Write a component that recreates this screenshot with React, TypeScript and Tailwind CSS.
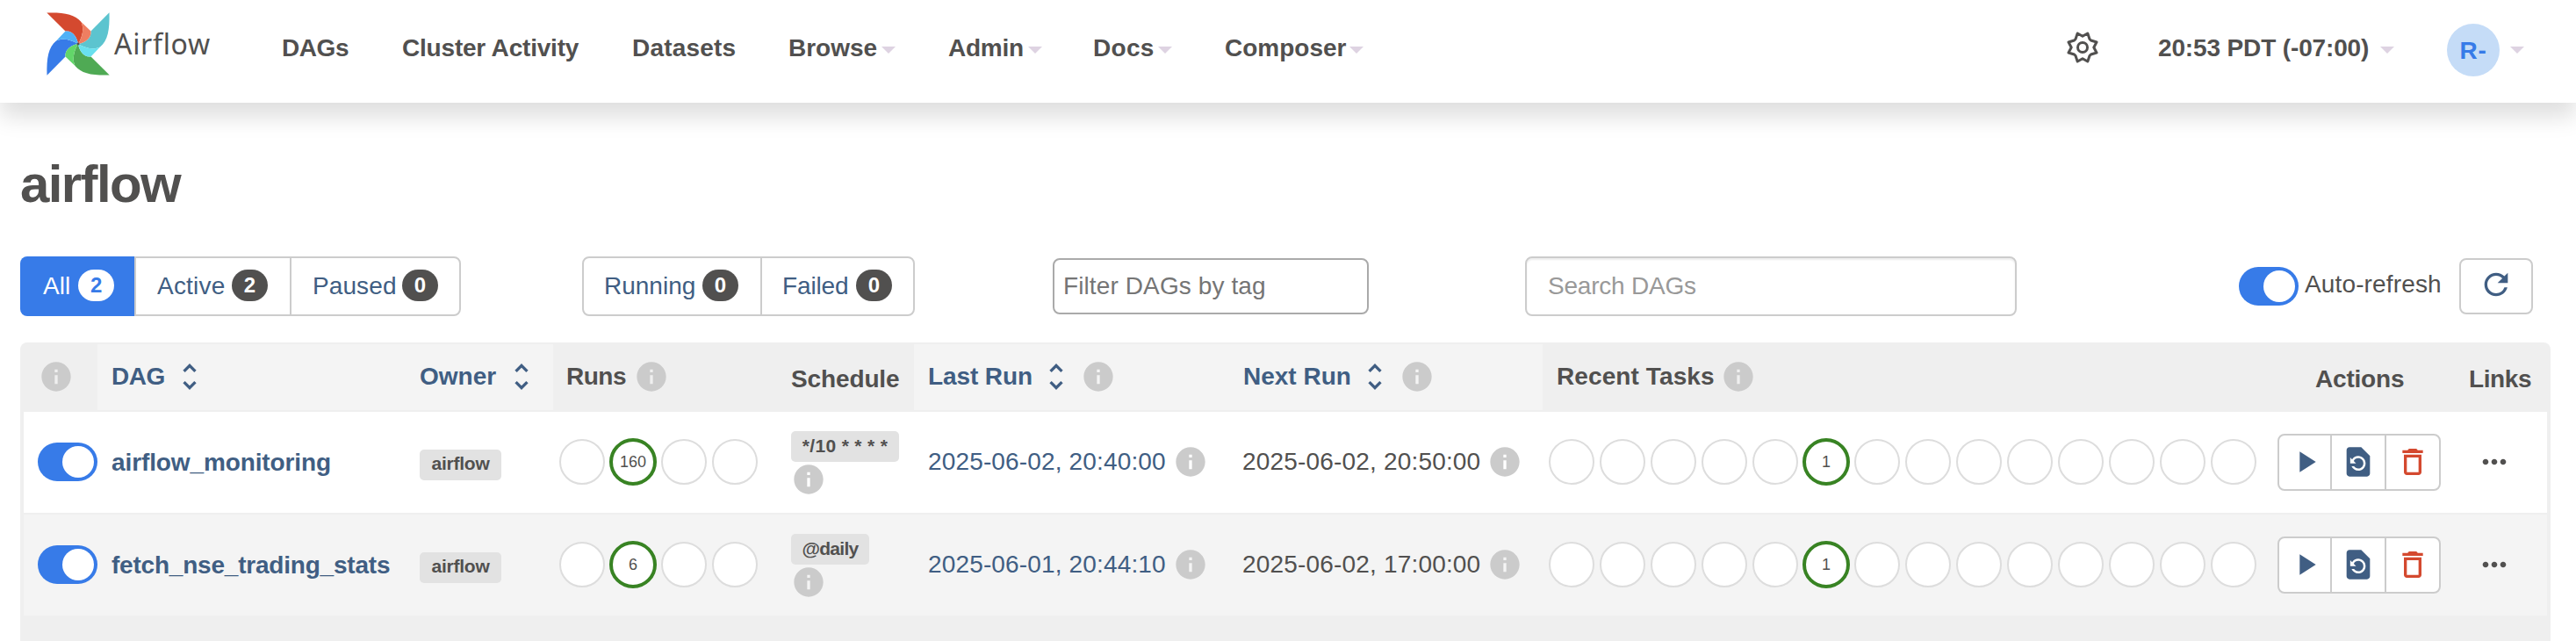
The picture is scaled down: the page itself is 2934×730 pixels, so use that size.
import React from 'react';
import {
  MdDeleteOutline,
  MdInfo,
  MdMoreHoriz,
  MdPlayArrow,
  MdRefresh,
  MdRestorePage,
  MdUnfoldMore,
} from 'react-icons/md';

const Caret = () => (
  <span className="mt-[14px] h-0 w-0 shrink-0 border-x-8 border-t-8 border-x-transparent border-t-[#ded3e2]" />
);

const Info = () => <MdInfo size={40} className="shrink-0 text-[#cbcbcb]" />;
const Sort = () => <MdUnfoldMore size={40} className="-ml-px shrink-0 text-[#405e83]" />;

const Toggle = () => (
  <span className="flex h-11 w-[68px] shrink-0 items-center justify-end rounded-full bg-[#377be8] pr-1">
    <span className="h-9 w-9 rounded-full bg-white" />
  </span>
);

const blades = [
  { turn: 0, main: '#d4492f', fold: '#ef7e61' },
  { turn: 90, main: '#5cc4cf', fold: '#69e0ee' },
  { turn: 180, main: '#4faa54', fold: '#62d669' },
  { turn: 270, main: '#377be8', fold: '#50b1f6' },
];

const Logo = () => (
  <svg width="72" height="72" viewBox="0 0 72 72">
    {blades.map((b) => (
      <path
        key={b.turn}
        transform={`rotate(${b.turn} 36 36)`}
        d="M.3 .5C20 0 32 2 39.500 11C43 18 41 28 36 36C35 29 30 20.500 21.500 21.500Z"
        fill={b.main}
      />
    ))}
    {blades.map((b) => (
      <path
        key={b.turn}
        transform={`rotate(${b.turn} 36 36)`}
        d="M39.500 11L50.500 21.500C51.500 30 43 35 36 36C41 28 43 18 39.500 11Z"
        fill={b.fold}
      />
    ))}
    <circle cx="36" cy="36" r="1.500" fill="#51504f" />
  </svg>
);

const Gear = () => (
  <svg width="36" height="36" viewBox="-18 -18 36 36" fill="none" stroke="#51504f" strokeWidth="3" strokeLinejoin="round">
    <path d="M0 -12.800L5.800 -16L8 -9.500L9.500 -8L16 -6L12.800 0L16 6L9.500 8L8 9.500L5.800 16L0 12.800L-5.800 16L-8 9.500L-9.500 8L-16 6L-12.800 0L-16 -6L-9.500 -8L-8 -9.500L-5.800 -16Z" />
    <circle r="5.500" />
  </svg>
);

const nav = [
  { label: 'DAGs', item: 'w-[137px]', text: 'tracking-[-0.41px]' },
  { label: 'Cluster Activity', item: 'w-[262px]', text: 'tracking-[-0.2px]' },
  { label: 'Datasets', item: 'w-[178px]', text: 'tracking-[0.2px]' },
  { label: 'Browse', item: 'w-[182px]', text: 'w-[106px]', menu: true },
  { label: 'Admin', item: 'w-[165px]', text: 'w-[91px] tracking-[-0.25px]', menu: true },
  { label: 'Docs', item: 'w-[150px]', text: 'w-[74px] tracking-[0.3px]', menu: true },
  { label: 'Composer', item: 'w-[160px]', text: 'w-[142px]', menu: true },
];

const Badge = ({ n, light }: { n: number; light?: boolean }) => (
  <span
    className={
      'mt-[-3px] flex h-9 w-[41px] items-center justify-center rounded-[18px] text-[24px] font-bold ' +
      (light ? 'bg-white text-[#377be8]' : 'bg-[#51504f] text-white')
    }
  >
    {n}
  </span>
);

const Tag = ({ children, w }: { children: React.ReactNode; w: string }) => (
  <span
    className={
      'flex h-[35px] items-center justify-center rounded-[5px] bg-[#e2e2e2] pb-[3px] text-[21px] leading-none font-bold whitespace-nowrap ' + w
    }
  >
    {children}
  </span>
);

const Circles = ({ count, at, value }: { count: number; at: number; value: number }) => (
  <div className="flex items-center gap-1.5">
    {Array.from({ length: count }, (_, i) =>
      i === at ? (
        <span
          key={i}
          className="-mx-px flex h-[54px] w-[54px] items-center justify-center rounded-full border-4 border-[#388323] bg-white text-[18px]"
        >
          {value}
        </span>
      ) : (
        <span key={i} className="h-[52px] w-[52px] rounded-full border-2 border-[#dddddd] bg-white" />
      ),
    )}
  </div>
);

const cols = 'grid grid-cols-[84px_351px_168px_255px_156px_359px_357px_821px_219px_104px]';

const rows = [
  {
    name: 'airflow_monitoring',
    nameClass: 'tracking-[-0.11px]',
    schedule: '*/10 * * * *',
    tagClass: 'w-[123px] tracking-[0.34px]',
    last: '2025-06-02, 20:40:00',
    next: '2025-06-02, 20:50:00',
    runs: 160,
    rowClass: 'bg-white',
  },
  {
    name: 'fetch_nse_trading_stats',
    nameClass: 'tracking-[-0.21px]',
    schedule: '@daily',
    tagClass: 'w-[89px] tracking-[-0.7px]',
    last: '2025-06-01, 20:44:10',
    next: '2025-06-02, 17:00:00',
    runs: 6,
    rowClass: 'bg-[#f4f4f4]',
  },
];

const HeadLink = ({ children }: { children: React.ReactNode }) => (
  <div className="my-[2px] flex items-center bg-[#f4f4f4] pb-px pl-4 text-[#405e83]">{children}</div>
);

export default function App() {
  return (
    <div className="h-[730px] w-[2934px] overflow-hidden bg-white font-['Liberation_Sans',Arial,sans-serif] text-[28px] leading-8 whitespace-nowrap text-[#51504f]">
      <header className="relative flex h-[117px] items-start bg-white shadow-[0_16px_24px_rgba(0,0,0,0.13)]">
        <div className="flex w-[321px] items-start pt-3.5 pl-[53px]">
          <Logo />
          <span className="mt-[14px] ml-[5px] font-['Noto_Sans',sans-serif] text-[32px] leading-[44px] tracking-[0.68px]">Airflow</span>
        </div>
        <nav className="flex pt-[39px] font-bold">
          {nav.map((n) => (
            <a key={n.label} className={'flex ' + n.item}>
              <span className={n.text}>{n.label}</span>
              {n.menu && <Caret />}
            </a>
          ))}
        </nav>
        <div className="ml-auto flex w-[580px] items-start font-bold">
          <span className="mt-[36px] w-[104px]">
            <Gear />
          </span>
          <span className="mt-[39px] w-[253px] tracking-[-0.14px]">20:53 PDT (-07:00)</span>
          <span className="mt-[39px] flex w-[76px]">
            <Caret />
          </span>
          <span className="mt-[27px] flex h-[60px] w-[60px] items-center justify-center rounded-full bg-[#c5dcf7] pt-px tracking-[0.8px] text-[#377be8]">
            R-
          </span>
          <span className="mt-[39px] ml-3 flex">
            <Caret />
          </span>
        </div>
      </header>

      <h1 className="mt-[57px] ml-[23px] h-[72px] text-[60px] leading-[72px] font-bold tracking-[-1.6px]">airflow</h1>

      <div className="mt-[46px] flex h-[68px] items-center pl-[23px] text-[#405e83]">
        <div className="flex h-[68px] w-[502px]">
          <a className="flex w-[130px] items-center gap-[9px] rounded-l-lg bg-[#377be8] pl-[26px] text-white">
            All <Badge n={2} light />
          </a>
          <a className="flex w-[177px] items-center border-y-2 border-l-2 border-[#cccccc] pl-6">
            <span className="w-[85px] tracking-[0.2px]">Active</span>
            <Badge n={2} />
          </a>
          <a className="flex flex-1 items-center rounded-r-lg border-2 border-[#cccccc] pl-[24px]">
            <span className="w-[102px] tracking-[0.1px]">Paused</span>
            <Badge n={0} />
          </a>
        </div>
        <div className="ml-[138px] flex h-[68px] w-[379px] rounded-lg border-2 border-[#cccccc]">
          <a className="flex w-[201px] items-center pl-[23px]">
            <span className="w-[112px]">Running</span>
            <Badge n={0} />
          </a>
          <a className="flex flex-1 items-center border-l-2 border-[#cccccc] pl-[23px]">
            <span className="w-[84px] tracking-[-0.14px]">Failed</span>
            <Badge n={0} />
          </a>
        </div>
        <div className="ml-[157px] flex h-16 w-[360px] items-center rounded-lg border-2 border-[#aaaaaa] pl-[10px] tracking-[0.11px] text-[#757575]">
          Filter DAGs by tag
        </div>
        <div className="ml-[178px] flex h-[68px] w-[560px] items-center rounded-lg border-2 border-[#cccccc] pl-6 tracking-[-0.22px] text-[#999999] shadow-[inset_0_2px_2px_rgba(0,0,0,0.075)]">
          Search DAGs
        </div>
        <label className="ml-[253px] flex items-center text-[#51504f]">
          <Toggle />
          <span className="-mt-1 ml-[7px] w-[176px] tracking-[0.14px]">Auto-refresh</span>
        </label>
        <button className="flex h-16 w-[84px] items-center justify-center rounded-lg border-2 border-[#cccccc] pb-1">
          <MdRefresh size={40} />
        </button>
      </div>

      <div className="mt-[30px] ml-[23px] h-[360px] w-[2882px] rounded-t-lg border-x-4 border-[#efefef] bg-[#efefef]">
        <div className={cols + ' h-[79px] font-bold'}>
          <div className="flex items-center pb-px pl-[17px]">
            <Info />
          </div>
          <HeadLink>
            <span className="w-[70px] tracking-[-0.5px]">DAG</span>
            <Sort />
          </HeadLink>
          <HeadLink>
            <span className="w-[97px]">Owner</span>
            <Sort />
          </HeadLink>
          <div className="flex items-center pb-px pl-[15px]">
            <span className="w-[77px] tracking-[-0.48px]">Runs</span>
            <Info />
          </div>
          <div className="flex items-center pt-1 pl-4 tracking-[-0.13px]">Schedule</div>
          <HeadLink>
            <span className="w-[127px] tracking-[-0.1px]">Last Run</span>
            <Sort />
            <span className="ml-2">
              <Info />
            </span>
          </HeadLink>
          <HeadLink>
            <span className="w-[131px]">Next Run</span>
            <Sort />
            <span className="ml-2">
              <Info />
            </span>
          </HeadLink>
          <div className="flex items-center pb-px pl-4">
            <span className="w-[187px] tracking-[0.1px]">Recent Tasks</span>
            <Info />
          </div>
          <div className="flex items-center pt-1 pl-[59px] tracking-[-0.2px]">Actions</div>
          <div className="flex items-center pt-1 pl-[15px] tracking-[-0.39px]">Links</div>
        </div>

        {rows.map((r) => (
          <div key={r.name} className={cols + ' h-[117px] border-b-2 border-[#efefef] ' + r.rowClass}>
            <div className="flex items-center pb-px pl-4">
              <Toggle />
            </div>
            <div className={'flex items-center pl-[16px] font-bold text-[#405e83] ' + r.nameClass}>{r.name}</div>
            <div className="flex items-center pt-[5px] pl-4">
              <Tag w="w-[93px] tracking-[-0.22px]">airflow</Tag>
            </div>
            <div className="flex items-center pb-px pl-[7px]">
              <Circles count={4} at={1} value={r.runs} />
            </div>
            <div className="flex flex-col items-start pt-[22px] pl-4">
              <Tag w={r.tagClass}>{r.schedule}</Tag>
              <Info />
            </div>
            <div className="flex items-center pb-px pl-4 text-[#405e83]">
              <span className="w-[279px] tracking-[0.15px]">{r.last}</span>
              <Info />
            </div>
            <div className="flex items-center pb-px pl-[15px]">
              <span className="w-[279px] tracking-[0.18px]">{r.next}</span>
              <Info />
            </div>
            <div className="flex items-center pb-px pl-[7px]">
              <Circles count={14} at={5} value={1} />
            </div>
            <div className="flex items-center pl-4">
              <div className="flex h-[65px] w-[186px] rounded-lg border-2 border-[#cccccc] bg-white text-[#405e83]">
                <span className="flex w-[58px] items-center justify-center pb-[2px] pl-[2px]">
                  <MdPlayArrow size={40} />
                </span>
                <span className="flex w-[62px] items-center justify-center border-l-2 border-[#cccccc] pb-[2px]">
                  <MdRestorePage size={40} />
                </span>
                <span className="flex flex-1 items-center justify-center border-l-2 border-[#cccccc] pb-[2px] text-[#d4492f]">
                  <MdDeleteOutline size={40} />
                </span>
              </div>
            </div>
            <div className="flex items-center pb-px pl-6">
              <MdMoreHoriz size={40} />
            </div>
          </div>
        ))}
      </div>
    </div>
  );
}
